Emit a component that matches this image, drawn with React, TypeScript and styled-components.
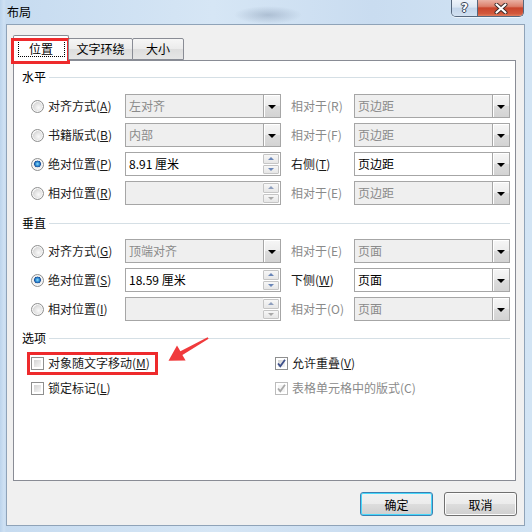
import React from 'react';
import styled, { createGlobalStyle } from 'styled-components';

const Global = createGlobalStyle`
  html, body { margin: 0; padding: 0; width: 532px; height: 532px; overflow: hidden; }
  body { font-family: "Noto Sans CJK SC", "Microsoft YaHei", sans-serif; font-size: 12px; color: #000; }
  * { box-sizing: border-box; }
`;

const Page = styled.div`
  width: 532px;
  height: 532px;
  position: relative;
  overflow: hidden;
  display: flex;
  flex-direction: column;
  background:
    radial-gradient(ellipse 34px 9px at 268px 15px, rgba(80, 100, 130, 0.28), transparent),
    linear-gradient(90deg, #bcd4ec 0px, #cfe1f3 4px, #c6dbf0 6px, #d6e6f5 40%, #c9dcf0 70%, #d2e4f4 100%);
`;

const TitleBar = styled.div`
  height: 24px;
  display: flex;
  align-items: flex-start;
  padding: 0 8px 0 7px;
  flex: none;
`;

const Title = styled.div`
  line-height: 24px;
  font-size: 12px;
  color: #000;
  flex: 1;
`;

const CaptionButtons = styled.div`
  display: flex;
  height: 17px;
  border: 1px solid #56677d;
  border-top: none;
  border-radius: 0 0 5px 5px;
  overflow: hidden;
  box-shadow: 0 1px 0 rgba(255, 255, 255, 0.6);
`;

const HelpBtn = styled.div`
  width: 26px;
  border-right: 1px solid #56677d;
  background: linear-gradient(#eef3fa, #dbe6f3 45%, #c3d5ea 50%, #d2e1f1);
  display: flex;
  align-items: center;
  justify-content: center;
  font-family: "DejaVu Sans", sans-serif;
  font-weight: bold;
  font-size: 12px;
  color: #fff;
  text-shadow: 0 0 1px #2c3a4e, 1px 0 0 #3c4a5e, -1px 0 0 #3c4a5e, 0 1px 0 #3c4a5e, 0 -1px 0 #3c4a5e;
`;

const CloseBtn = styled.div`
  width: 45px;
  background: linear-gradient(#eab1a4, #dc7f6b 40%, #c9452c 50%, #d2583c 85%, #e07f5e);
  display: flex;
  align-items: center;
  justify-content: center;
`;

const Client = styled.div`
  margin: 0 7px 0 6px;
  height: 502px;
  flex: none;
  border: 1px solid #8fa3b8;
  background: #f0f0f0;
  padding: 10px 8px 0 6px;
  display: flex;
  flex-direction: column;
`;

const TabsRow = styled.div`
  display: flex;
  align-items: flex-end;
  height: 26px;
  margin-bottom: -1px;
  position: relative;
  z-index: 1;
`;

const Tab = styled.div<{ $active?: boolean; $w: number }>`
  position: relative;
  width: ${(p) => p.$w}px;
  height: ${(p) => (p.$active ? 26 : 22)}px;
  margin-bottom: ${(p) => (p.$active ? 0 : 1)}px;
  margin-left: ${(p) => (p.$active ? 0 : -1)}px;
  border: 1px solid #898c95;
  border-bottom: ${(p) => (p.$active ? 'none' : '1px solid #898c95')};
  border-radius: 2px 2px 0 0;
  background: ${(p) => (p.$active ? '#fff' : 'linear-gradient(#f6f6f6, #ebebeb 50%, #dddddd 50%, #e6e6e6)')};
  display: flex;
  justify-content: center;
  align-items: ${(p) => (p.$active ? 'flex-start' : 'center')};
  padding-top: ${(p) => (p.$active ? 4 : 0)}px;
  font-size: 12px;
  line-height: 16px;
`;

const FocusText = styled.div`
  width: 47px;
  height: 17px;
  border: 1px dotted #000;
  text-align: center;
  line-height: 15px;
`;

const RedFrame = styled.div`
  position: absolute;
  left: -3px;
  top: 2px;
  width: 59px;
  height: 26px;
  border: 3px solid #ee2a2c;
  pointer-events: none;
`;

const Panel = styled.div`
  height: 421px;
  flex: none;
  border: 1px solid #898c95;
  background: #fff;
  padding: 8px 5px 0 8px;
  display: flex;
  flex-direction: column;
`;

const SectionHead = styled.div<{ $mt?: number }>`
  display: flex;
  align-items: center;
  height: 16px;
  line-height: 16px;
  gap: 3px;
  margin-top: ${(p) => p.$mt ?? 0}px;
  &::after {
    content: '';
    flex: 1;
    height: 1px;
    background: #d5dfe5;
  }
`;

const Grid = styled.div<{ $mt: number }>`
  display: grid;
  grid-template-columns: 94px 156px 73px 156px;
  grid-auto-rows: 24px;
  row-gap: 5px;
  margin: ${(p) => p.$mt}px 0 0 9px;
  align-items: center;
`;

const OptGrid = styled.div`
  display: grid;
  grid-template-columns: 244px 1fr;
  grid-auto-rows: 18px;
  row-gap: 7px;
  margin: 8px 0 0 9px;
  align-items: center;
`;

const ChoiceCell = styled.div`
  display: flex;
  align-items: center;
  gap: 4px;
  line-height: 16px;
  white-space: nowrap;
`;

const Text = styled.span<{ $disabled?: boolean }>`
  color: ${(p) => (p.$disabled ? '#8a8a8a' : '#1a1a1a')};
  white-space: nowrap;
  font-size: 12px;
  line-height: 16px;
`;

const SideLabel = styled(Text)`
  padding-left: 10px;
`;

const RadioDot = styled.span<{ $checked?: boolean }>`
  width: 13px;
  height: 13px;
  flex: none;
  border-radius: 50%;
  border: 1px solid #8e8f8f;
  background: ${(p) =>
    p.$checked
      ? 'radial-gradient(circle at 50% 45%, #8fe0ff 0px, #2f8ad0 2px, #1b4f9a 3.2px, #e4e4e4 3.6px, #f4f4f4 5px, #d9d9d9 6px)'
      : 'radial-gradient(circle at 60% 60%, #fafafa 0px, #e8e8e8 3px, #d8d8d8 5.5px, #f4f4f4 6px)'};
  box-shadow: inset 0 0 0 1px #f7f7f7;
`;

const Box = styled.span<{ $disabled?: boolean }>`
  width: 13px;
  height: 13px;
  flex: none;
  border: 1px solid ${(p) => (p.$disabled ? '#bcbcbc' : '#8e8f8f')};
  background: #fff;
  padding: 2px;
  display: flex;
`;

const BoxInner = styled.span<{ $disabled?: boolean }>`
  flex: 1;
  position: relative;
  background: ${(p) => (p.$disabled ? '#f4f4f4' : 'linear-gradient(135deg, #d4d4d4, #f6f6f6)')};
  svg {
    position: absolute;
    left: -2px;
    top: -2px;
  }
`;

const ComboBox = styled.div<{ $disabled?: boolean }>`
  height: 24px;
  border: 1px solid #a6a6a6;
  background: ${(p) => (p.$disabled ? '#efefef' : '#fff')};
  display: flex;
  align-items: stretch;
`;

const ComboText = styled.div<{ $disabled?: boolean }>`
  flex: 1;
  padding-left: 3px;
  line-height: 22px;
  color: ${(p) => (p.$disabled ? '#8a8a8a' : '#000')};
  white-space: nowrap;
`;

const DropBtn = styled.div`
  width: 17px;
  margin: 0;
  border-left: 1px solid #a6a6a6;
  background: linear-gradient(#f6f6f6, #ececec 50%, #dcdcdc 51%, #d3d3d3);
  box-shadow: inset 1px 1px 0 #fff;
  display: flex;
  align-items: center;
  justify-content: center;
  &::after {
    content: '';
    width: 0;
    height: 0;
    border-left: 4px solid transparent;
    border-right: 4px solid transparent;
    border-top: 4px solid #000;
    margin-top: 1px;
  }
`;

const SpinCol = styled.div`
  width: 17px;
  display: flex;
  flex-direction: column;
  gap: 1px;
  padding: 1px 1px 1px 0;
  background: #fff;
`;

const SpinBtn = styled.div<{ $down?: boolean; $dim?: boolean }>`
  flex: 1;
  border: 1px solid #c5c5c5;
  border-radius: 1px;
  background: linear-gradient(#f7f7f7, #e6e6e6);
  display: flex;
  align-items: center;
  justify-content: center;
  &::after {
    content: '';
    width: 0;
    height: 0;
    border-left: 3.5px solid transparent;
    border-right: 3.5px solid transparent;
    ${(p) =>
      p.$down
        ? `border-top: 3px solid ${p.$dim ? '#a9a9a9' : '#6a86b8'};`
        : `border-bottom: 3px solid ${p.$dim ? '#8f9fbd' : '#6a86b8'};`}
  }
`;

const Highlight = styled.span`
  display: inline-flex;
  align-items: center;
  gap: 4px;
  height: 15px;
  padding-right: 4px;
  outline: 3px solid #ee2a2c;
  outline-offset: 1px;
`;

const ButtonRow = styled.div`
  display: flex;
  justify-content: flex-end;
  gap: 11px;
  margin: 11px -1px 0 0;
`;

const DlgButton = styled.div<{ $default?: boolean }>`
  width: 73px;
  height: 24px;
  border: 1px solid ${(p) => (p.$default ? '#3c7fb1' : '#707070')};
  border-radius: 3px;
  background: linear-gradient(#f2f2f2, #ebebeb 50%, #dddddd 51%, #cfcfcf);
  box-shadow: inset 0 0 0 1px ${(p) => (p.$default ? '#48d8fb' : '#fcfcfc')};
  display: flex;
  align-items: center;
  justify-content: center;
  font-size: 12px;
  color: #000;
`;

const Arrow = styled.svg`
  position: absolute;
  left: 0;
  top: 0;
  pointer-events: none;
`;

const Mn = ({ t, k }: { t: string; k: string }) => (
  <>
    {t}(<u>{k}</u>)
  </>
);

const Radio = ({ checked, children }: { checked?: boolean; children: React.ReactNode }) => (
  <ChoiceCell>
    <RadioDot $checked={checked} />
    <Text>{children}</Text>
  </ChoiceCell>
);

const Check = ({ disabled, checked }: { disabled?: boolean; checked?: boolean }) => (
  <Box $disabled={disabled}>
    <BoxInner $disabled={disabled}>
      {checked && (
        <svg width="11" height="11" viewBox="0 0 11 11">
          <path
            d="M2 5.5 L4.3 8.2 L9 1.8"
            fill="none"
            stroke={disabled ? '#a8a8a8' : '#3d4f8a'}
            strokeWidth="1.8"
          />
        </svg>
      )}
    </BoxInner>
  </Box>
);

const Combo = ({ value, disabled }: { value: string; disabled?: boolean }) => (
  <ComboBox $disabled={disabled}>
    <ComboText $disabled={disabled}>{value}</ComboText>
    <DropBtn />
  </ComboBox>
);

const Spin = ({ value, disabled }: { value: string; disabled?: boolean }) => (
  <ComboBox $disabled={disabled}>
    <ComboText $disabled={disabled}>{value}</ComboText>
    <SpinCol>
      <SpinBtn $dim={disabled} />
      <SpinBtn $down $dim={disabled} />
    </SpinCol>
  </ComboBox>
);

export default function App() {
  return (
    <>
      <Global />
      <Page>
        <TitleBar>
          <Title>布局</Title>
          <CaptionButtons>
            <HelpBtn>?</HelpBtn>
            <CloseBtn>
              <svg width="14" height="11" viewBox="0 0 14 11">
                <path d="M2.5 1.5 L11.5 9.5 M11.5 1.5 L2.5 9.5" stroke="#3a2a28" strokeWidth="4" strokeLinecap="round" />
                <path d="M2.5 1.5 L11.5 9.5 M11.5 1.5 L2.5 9.5" stroke="#ffffff" strokeWidth="2.2" strokeLinecap="round" />
              </svg>
            </CloseBtn>
          </CaptionButtons>
        </TitleBar>
        <Client>
          <TabsRow>
            <Tab $active $w={56}>
              <FocusText>位置</FocusText>
              <RedFrame />
            </Tab>
            <Tab $w={65}>文字环绕</Tab>
            <Tab $w={52}>大小</Tab>
          </TabsRow>
          <Panel>
            <SectionHead>水平</SectionHead>
            <Grid $mt={9}>
              <Radio><Mn t="对齐方式" k="A" /></Radio>
              <Combo value="左对齐" disabled />
              <SideLabel $disabled>相对于(R)</SideLabel>
              <Combo value="页边距" disabled />

              <Radio><Mn t="书籍版式" k="B" /></Radio>
              <Combo value="内部" disabled />
              <SideLabel $disabled>相对于(F)</SideLabel>
              <Combo value="页边距" disabled />

              <Radio checked><Mn t="绝对位置" k="P" /></Radio>
              <Spin value="8.91 厘米" />
              <SideLabel><Mn t="右侧" k="T" /></SideLabel>
              <Combo value="页边距" />

              <Radio><Mn t="相对位置" k="R" /></Radio>
              <Spin value="" disabled />
              <SideLabel $disabled>相对于(E)</SideLabel>
              <Combo value="页边距" disabled />
            </Grid>

            <SectionHead $mt={10}>垂直</SectionHead>
            <Grid $mt={8}>
              <Radio><Mn t="对齐方式" k="G" /></Radio>
              <Combo value="顶端对齐" disabled />
              <SideLabel $disabled>相对于(E)</SideLabel>
              <Combo value="页面" disabled />

              <Radio checked><Mn t="绝对位置" k="S" /></Radio>
              <Spin value="18.59 厘米" />
              <SideLabel><Mn t="下侧" k="W" /></SideLabel>
              <Combo value="页面" />

              <Radio><Mn t="相对位置" k="I" /></Radio>
              <Spin value="" disabled />
              <SideLabel $disabled>相对于(O)</SideLabel>
              <Combo value="页面" disabled />
            </Grid>

            <SectionHead $mt={9}>选项</SectionHead>
            <OptGrid>
              <ChoiceCell>
                <Highlight>
                  <Check />
                  <Text><Mn t="对象随文字移动" k="M" /></Text>
                </Highlight>
              </ChoiceCell>
              <ChoiceCell>
                <Check checked />
                <Text><Mn t="允许重叠" k="V" /></Text>
              </ChoiceCell>
              <ChoiceCell>
                <Check />
                <Text><Mn t="锁定标记" k="L" /></Text>
              </ChoiceCell>
              <ChoiceCell>
                <Check checked disabled />
                <Text $disabled>表格单元格中的版式(C)</Text>
              </ChoiceCell>
            </OptGrid>
          </Panel>
          <ButtonRow>
            <DlgButton $default>确定</DlgButton>
            <DlgButton>取消</DlgButton>
          </ButtonRow>
        </Client>
        <Arrow width="532" height="532" viewBox="0 0 532 532">
          <polygon
            points="168.5,360.8 177,345.6 180.4,351.2 207.6,337.2 208.6,338.8 182.4,355 185.6,360.4"
            fill="#f03a3c"
          />
        </Arrow>
      </Page>
    </>
  );
}
